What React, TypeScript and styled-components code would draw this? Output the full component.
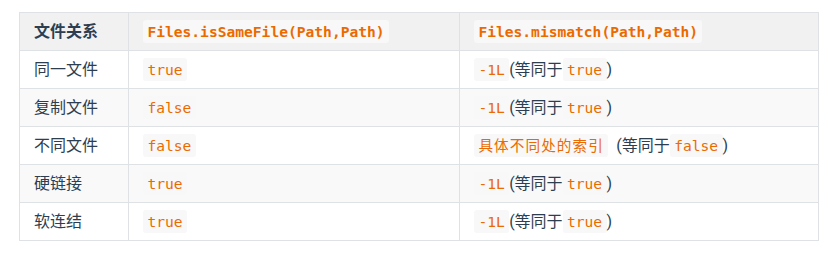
import React from "react";
import styled, { createGlobalStyle } from "styled-components";

const Global = createGlobalStyle`
  html, body { margin: 0; padding: 0; background: #fff; }
  body {
    font-family: Roboto, "Noto Sans CJK SC", sans-serif;
    color: #2c3e50;
    font-size: 16px;
  }
`;

const Page = styled.div`
  padding: 12px 0 0 19px;
`;

const Table = styled.table`
  border-collapse: collapse;
  table-layout: fixed;
  width: 799px;
`;

const Row = styled.tr<{ $striped?: boolean }>`
  background: ${(p) => (p.$striped ? "#f9f9f9" : "#fff")};
  border-top: 1px solid #dfe2e5;
`;

const HeadRow = styled.tr`
  background: #f1f1f1;
`;

const Th = styled.th`
  border: 1px solid #dfe2e5;
  padding: 8px 14px;
  line-height: 21px;
  text-align: left;
  font-weight: 700;
  font-size: 16px;
`;

const Td = styled.td`
  border: 1px solid #dfe2e5;
  padding: 8px 14px;
  line-height: 21px;
  font-size: 16px;
  white-space: nowrap;
`;

const Code = styled.code<{ $wide?: boolean }>`
  font-family: "DejaVu Sans Mono", "Noto Sans CJK SC", monospace;
  font-size: 14.6px;
  line-height: 21px;
  color: #eb6a00;
  background: #f8f8f8;
  border-radius: 3px;
  padding: 3px 4.4px;
  letter-spacing: ${(p) => (p.$wide ? "1.1px" : "0")};
  vertical-align: baseline;
`;

const Gap = styled.span`
  display: inline-block;
  width: 8px;
`;

type R = { name: string; same: string; mismatch: React.ReactNode };

const eq = (v: string) => (
  <>
    (等同于<Code>{v}</Code>)
  </>
);

const rows: R[] = [
  { name: "同一文件", same: "true", mismatch: <><Code>-1L</Code>{eq("true")}</> },
  { name: "复制文件", same: "false", mismatch: <><Code>-1L</Code>{eq("true")}</> },
  {
    name: "不同文件",
    same: "false",
    mismatch: (
      <>
        <Code $wide>具体不同处的索引</Code>
        <Gap />
        {eq("false")}
      </>
    ),
  },
  { name: "硬链接", same: "true", mismatch: <><Code>-1L</Code>{eq("true")}</> },
  { name: "软连结", same: "true", mismatch: <><Code>-1L</Code>{eq("true")}</> },
];

export default function App() {
  return (
    <Page>
      <Global />
      <Table>
        <colgroup>
          <col style={{ width: 109 }} />
          <col style={{ width: 331 }} />
          <col style={{ width: 359 }} />
        </colgroup>
        <thead>
          <HeadRow>
            <Th>文件关系</Th>
            <Th>
              <Code>Files.isSameFile(Path,Path)</Code>
            </Th>
            <Th>
              <Code>Files.mismatch(Path,Path)</Code>
            </Th>
          </HeadRow>
        </thead>
        <tbody>
          {rows.map((r, i) => (
            <Row key={r.name} $striped={i % 2 === 1}>
              <Td>{r.name}</Td>
              <Td>
                <Code>{r.same}</Code>
              </Td>
              <Td>{r.mismatch}</Td>
            </Row>
          ))}
        </tbody>
      </Table>
    </Page>
  );
}
